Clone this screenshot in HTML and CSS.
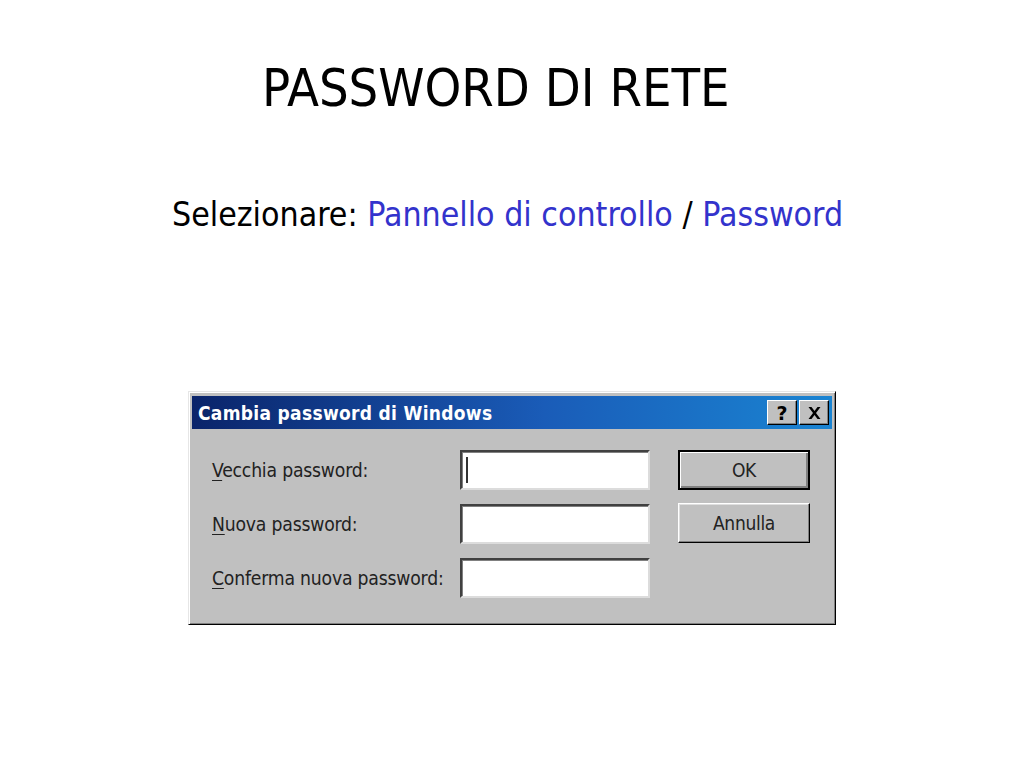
FILE: index.html
```html
<!DOCTYPE html>
<html lang="it">
<head>
<meta charset="utf-8">
<title>Password di rete</title>
<link rel="stylesheet" href="styles.css">
</head>
<body>
<div class="slide">
  <h1 class="title">PASSWORD DI RETE</h1>
  <p class="subtitle">Selezionare: <span class="link">Pannello di controllo</span> / <span class="link">Password</span></p>
  <div class="dialog">
    <div class="titlebar">
      <span class="caption">Cambia password di Windows</span>
      <div class="tb-buttons">
        <span class="tb-btn">?</span>
        <span class="tb-btn tb-close">
          <svg width="13" height="12" viewBox="0 0 13 12"><path d="M0.5 0h3l3 4 3-4h3l-4.5 6 4.5 6h-3l-3-4-3 4h-3L5 6z" fill="#000"/></svg>
        </span>
      </div>
    </div>
    <div class="body">
      <div class="fields">
        <div class="row"><span class="label"><u>V</u>ecchia password:</span><span class="input"><span class="caret"></span></span></div>
        <div class="row"><span class="label"><u>N</u>uova password:</span><span class="input"></span></div>
        <div class="row"><span class="label"><u>C</u>onferma nuova password:</span><span class="input"></span></div>
      </div>
      <div class="buttons">
        <span class="btn btn-default"><span class="btn-inner">OK</span></span>
        <span class="btn"><span class="btn-inner">Annulla</span></span>
      </div>
    </div>
  </div>
</div>
</body>
</html>
```

FILE: styles.css
```css
* { box-sizing: border-box; }
html, body { margin: 0; padding: 0; background: #fff; }
.slide {
  width: 1024px;
  height: 768px;
  display: flex;
  flex-direction: column;
  align-items: flex-start;
  font-family: "DejaVu Sans Condensed", "DejaVu Sans", sans-serif;
}
.title {
  margin: 56px 0 0 262px;
  font-weight: normal;
  font-size: 52px;
  line-height: 64px;
  color: #000;
  letter-spacing: 0;
}
.subtitle {
  margin: 75px 0 0 172px;
  font-size: 33.6px;
  line-height: 40px;
  color: #000;
}
.link { color: #3333cc; }
.dialog {
  margin: 156px 0 0 188px;
  width: 648px;
  height: 234px;
  background: #c0c0c0;
  border: 1px solid;
  border-color: #e6e6e6 #000 #000 #e6e6e6;
  box-shadow: inset 1px 1px 0 #fff, inset -1px -1px 0 #808080;
  padding: 4px 3px 3px 3px;
  display: flex;
  flex-direction: column;
  font-family: "DejaVu Sans Condensed", "DejaVu Sans", sans-serif;
}
.titlebar {
  height: 33px;
  background: linear-gradient(to right, #0a246a 0%, #1a5cb8 55%, #1a84d2 100%);
  display: flex;
  align-items: center;
  justify-content: space-between;
  padding: 0 3px 0 6px;
}
.caption {
  color: #fff;
  font-weight: bold;
  font-size: 19px;
  letter-spacing: 0.3px;
}
.tb-buttons { display: flex; gap: 2px; }
.tb-btn {
  width: 30px;
  height: 25px;
  background: #c0c0c0;
  border: 1px solid;
  border-color: #fff #000 #000 #fff;
  box-shadow: inset -1px -1px 0 #808080;
  display: flex;
  align-items: center;
  justify-content: center;
  font-family: "DejaVu Sans", sans-serif;
  font-weight: bold;
  font-size: 19px;
  color: #000;
}
.body {
  flex: 1;
  display: flex;
  padding: 21px 0 0 20px;
}
.fields { display: flex; flex-direction: column; gap: 14px; }
.row { display: flex; align-items: center; }
.label {
  width: 248px;
  font-family: "DejaVu Sans Condensed", sans-serif;
  font-size: 19.2px;
  color: #222;
  letter-spacing: -0.2px;
}
.label u { text-decoration-thickness: 1px; text-underline-offset: 3px; }
.input {
  width: 190px;
  height: 40px;
  background: #fff;
  border: 2px solid;
  border-color: #404040 #dcdcdc #dcdcdc #404040;
  box-shadow: inset 1px 1px 0 #808080;
  display: flex;
  align-items: center;
  padding-left: 4px;
}
.caret { width: 2px; height: 26px; background: #333; }
.buttons {
  display: flex;
  flex-direction: column;
  gap: 13px;
  margin-left: 28px;
}
.btn {
  width: 132px;
  height: 40px;
  background: #c0c0c0;
  border: 1px solid;
  border-color: #fff #000 #000 #fff;
  box-shadow: inset -1px -1px 0 #808080, inset 1px 1px 0 #dfdfdf;
  display: flex;
}
.btn-default {
  border: 2px solid #000;
  box-shadow: inset 1px 1px 0 #fff, inset -2px -2px 0 #808080;
}
.btn-inner {
  flex: 1;
  display: flex;
  align-items: center;
  justify-content: center;
  font-size: 19px;
  color: #222;
  letter-spacing: -0.3px;
}
```
